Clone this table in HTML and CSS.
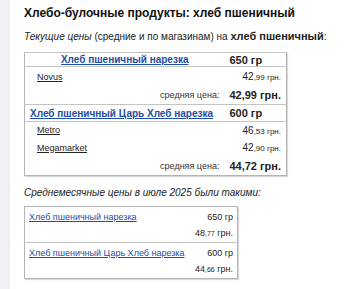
FILE: index.html
```html
<!DOCTYPE html>
<html lang="ru">
<head>
  <meta charset="UTF-8">
  <meta name="viewport" content="width=device-width, initial-scale=1">
  <title>Хлеб пшеничный</title>
  <link rel="stylesheet" href="styles.css">
</head>
<body>

  <div class="page">
    <h2 class="title">Хлебо-булочные продукты: хлеб пшеничный</h2>

    <p class="lead">
      <i>Текущие цены</i> (средние и по магазинам) на <b>хлеб пшеничный</b>:
    </p>

    <!-- Current prices by store -->
    <table class="prices">
      <tr class="product">
        <td class="name"><a href="#">Хлеб пшеничный нарезка</a></td>
        <td class="weight">650 гр</td>
      </tr>
      <tr class="shop">
        <td><a href="#">Novus</a></td>
        <td class="price">42<small>,99 грн.</small></td>
      </tr>
      <tr class="avg">
        <td class="avg-label">средняя цена:</td>
        <td class="avg-price">42,99 грн.</td>
      </tr>
      <tr class="product">
        <td class="name left"><a href="#">Хлеб пшеничный Царь Хлеб нарезка</a></td>
        <td class="weight">600 гр</td>
      </tr>
      <tr class="shop first">
        <td><a href="#">Metro</a></td>
        <td class="price">46<small>,53 грн.</small></td>
      </tr>
      <tr class="shop">
        <td><a href="#">Megamarket</a></td>
        <td class="price">42<small>,90 грн.</small></td>
      </tr>
      <tr class="avg">
        <td class="avg-label">средняя цена:</td>
        <td class="avg-price">44,72 грн.</td>
      </tr>
    </table>

    <p class="lead month"><i>Среднемесячные цены в июле 2025 были такими:</i></p>

    <!-- Monthly averages -->
    <table class="monthly">
      <tr>
        <td class="m-name"><a href="#">Хлеб пшеничный нарезка</a></td>
        <td class="m-val">650 гр<br>48<small>,77</small> грн.</td>
      </tr>
      <tr>
        <td class="m-name"><a href="#">Хлеб пшеничный Царь Хлеб нарезка</a></td>
        <td class="m-val">600 гр<br>44<small>,66</small> грн.</td>
      </tr>
    </table>
  </div>

</body>
</html>
```

FILE: styles.css
```css
body {
  margin: 0;
  background: #eef0f4;
  font-family: "Liberation Sans", Arial, sans-serif;
  color: #222;
}

.page {
  margin-left: 10px;
  height: 286px;
  padding: 6px 14px 0;
  background: #fff;
  overflow: hidden;
}

a {
  color: #1d4ea3;
}

.title {
  margin: 0;
  font-size: 12px;
  line-height: 15px;
  font-weight: bold;
  color: #111;
}

.lead {
  margin: 8px 0 8px;
  font-size: 10px;
  line-height: 14px;
}

.lead b {
  font-size: 11px;
}

/* current prices */
.prices {
  width: 263px;
  border-collapse: collapse;
  border: 1px solid #b4b4b4;
  box-shadow: 1px 1px 1px rgba(0, 0, 0, 0.15);
  font-size: 9px;
}

.prices td {
  padding: 0 5px;
}

.product td {
  height: 13px;
  border-top: 1px solid #c4c4c4;
  border-bottom: 1px solid #c4c4c4;
  font-weight: bold;
  font-size: 10px;
}

.product .name {
  text-align: center;
}

.product .name.left {
  text-align: left;
  height: 16px;
}

.product a {
  color: #1d4ea3;
}

.product .weight {
  width: 46px;
  font-size: 11px;
  text-align: left;
}

.shop td {
  height: 19px;
}

.shop td:first-child {
  padding-left: 12px;
}

.shop.first td {
  height: 16px;
}

.shop a {
  color: #222;
}

.price {
  text-align: right;
  font-size: 10px;
}

.price small {
  font-size: 8px;
}

.avg td {
  height: 18px;
}

.avg-label {
  text-align: right;
  color: #333;
}

.avg-price {
  text-align: right;
  font-weight: bold;
  font-size: 11px;
  white-space: nowrap;
}

.month {
  margin: 10px 0 6px;
}

/* monthly averages */
.monthly {
  width: 214px;
  border-collapse: collapse;
  border: 1px solid #b4b4b4;
  box-shadow: 1px 1px 1px rgba(0, 0, 0, 0.15);
  font-size: 9px;
}

.monthly td {
  height: 30px;
  padding: 2px 4px 0;
  vertical-align: top;
  line-height: 16px;
}

.monthly tr + tr td {
  border-top: 1px solid #c4c4c4;
}

.m-val {
  text-align: right;
  white-space: nowrap;
}

.m-val small {
  font-size: 7px;
}
```
